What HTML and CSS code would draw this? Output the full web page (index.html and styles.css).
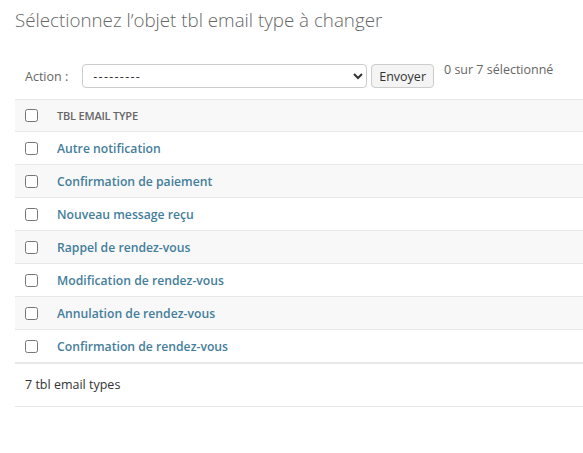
FILE: index.html
```html
<!DOCTYPE html>
<html lang="fr">
<head>
<meta charset="utf-8">
<link rel="stylesheet" href="styles.css">
</head>
<body>
<div class="content">
  <h1 class="title">Sélectionnez l’objet tbl email type à changer</h1>
  <div class="actions">
    <label class="action-label">Action :</label>
    <select class="action-select"><option>---------</option></select>
    <button class="go">Envoyer</button>
    <span class="counter">0 sur 7 sélectionné</span>
  </div>
  <table class="result">
    <thead>
      <tr><th class="cb"><input type="checkbox"></th><th class="col">TBL EMAIL TYPE</th></tr>
    </thead>
    <tbody>
      <tr><td class="cb"><input type="checkbox"></td><td><a href="#">Autre notification</a></td></tr>
      <tr><td class="cb"><input type="checkbox"></td><td><a href="#">Confirmation de paiement</a></td></tr>
      <tr><td class="cb"><input type="checkbox"></td><td><a href="#">Nouveau message reçu</a></td></tr>
      <tr><td class="cb"><input type="checkbox"></td><td><a href="#">Rappel de rendez-vous</a></td></tr>
      <tr><td class="cb"><input type="checkbox"></td><td><a href="#">Modification de rendez-vous</a></td></tr>
      <tr><td class="cb"><input type="checkbox"></td><td><a href="#">Annulation de rendez-vous</a></td></tr>
      <tr><td class="cb"><input type="checkbox"></td><td><a href="#">Confirmation de rendez-vous</a></td></tr>
    </tbody>
  </table>
  <p class="paginator">7 tbl email types</p>
</div>
</body>
</html>
```
FILE: styles.css
```css
html, body {
  margin: 0;
  padding: 0;
  background: #fff;
  overflow: hidden;
}
body {
  font-family: "Open Sans", "Noto Sans", sans-serif;
  color: #333;
  font-size: 14px;
}
.content {
  padding: 0 0 0 15px;
}
.title {
  margin: 0;
  padding: 8px 0 0 0;
  font-size: 18.75px;
  font-weight: 300;
  color: #666;
  line-height: 24px;
  height: 56px;
  box-sizing: border-box;
}
.actions {
  display: flex;
  align-items: center;
  height: 24px;
  padding: 8px 10px 11px 10px;
  color: #666;
  font-size: 12.5px;
}
.action-label {
  margin-right: 14px;
}
.action-select {
  width: 285px;
  height: 24px;
  border: 1px solid #ccc;
  border-radius: 4px;
  background: #fff;
  font-family: inherit;
  font-size: 12.5px;
  letter-spacing: 1.3px;
  color: #333;
  padding: 0 6px;
}
.go {
  margin-left: 4px;
  height: 24px;
  padding: 0 7px;
  border: 1px solid #ccc;
  border-radius: 4px;
  background: #f4f4f4;
  font-family: inherit;
  font-size: 12.5px;
  color: #333;
}
.counter {
  margin-left: 10px;
  align-self: flex-start;
  margin-top: -3px;
}
.result {
  width: 100%;
  border-collapse: collapse;
  margin-top: 0;
}
.result th, .result td {
  text-align: left;
  padding: 0 10px;
  vertical-align: middle;
}
.result thead th {
  height: 31px;
  background: #f8f8f8;
  border-top: 1px solid #e8e8e8;
  border-bottom: 1px solid #e8e8e8;
  font-size: 11px;
  font-weight: 600;
  color: #666;
  letter-spacing: -0.2px;
}
.result td {
  height: 32px;
  border-bottom: 1px solid #e8e8e8;
  font-size: 12.2px;
}
.result tbody tr:nth-child(even) td {
  background: #f8f8f8;
}
.result tbody tr:last-child td {
  border-bottom: 2px solid #e8e8e8;
}
.result .cb {
  width: 13px;
  padding: 0 9px 0 10px;
}
.result input[type="checkbox"] {
  margin: 0;
  width: 13px;
  height: 13px;
  display: block;
}
.result a {
  color: #447e9b;
  font-weight: 600;
  text-decoration: none;
}
.paginator {
  margin: 0;
  height: 42px;
  line-height: 42px;
  padding: 0 10px;
  border-bottom: 1px solid #e8e8e8;
  font-size: 12.5px;
  color: #333;
}
```
